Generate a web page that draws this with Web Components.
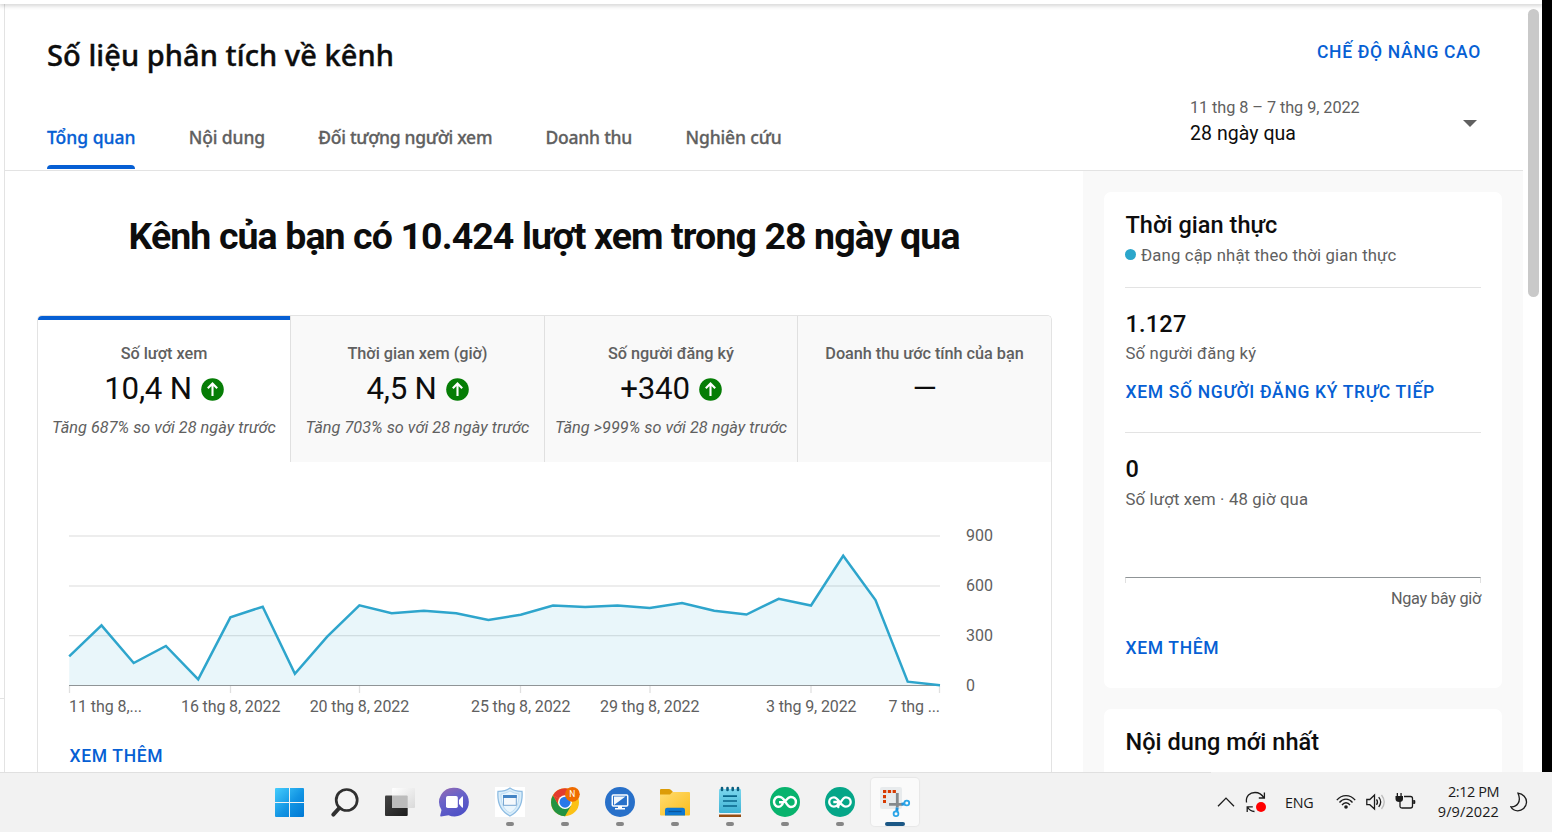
<!DOCTYPE html>
<html lang="vi">
<head>
<meta charset="utf-8">
<title>Số liệu phân tích về kênh</title>
<style>
  html, body { margin: 0; height: 100%; overflow: hidden; background: #fff; }
  body { font-family: Roboto, "Liberation Sans", sans-serif; color: #0d0d0d; }
</style>
</head>
<body>
<desktop-screen></desktop-screen>
<script>
const define = (name, html, setup) => {
  const tpl = document.createElement('template');
  tpl.innerHTML = '<style>*{box-sizing:border-box}</style>' + html;
  customElements.define(name, class extends HTMLElement {
    constructor() {
      super();
      this.attachShadow({ mode: 'open' }).append(tpl.content.cloneNode(true));
    }
    connectedCallback() { if (setup) setup(this, this.shadowRoot); }
  });
};

/* Upper-case text link */
define('action-link', `
<style>
  :host { display: block; font: 500 17.5px/24px Roboto, sans-serif; letter-spacing: .67px; color: #065fd4; white-space: nowrap; }
</style><slot></slot>`);

/* One navigation tab */
define('nav-tab', `
<style>
  :host { display: flex; flex-direction: column; justify-content: space-between; height: 49px; white-space: nowrap;
    font: 500 17.5px/35px "Noto Sans", "Open Sans", sans-serif; color: #606060; letter-spacing: var(--track, 0); -webkit-text-stroke: .3px; }
  :host([active]) { color: #065fd4; }
  i { display: block; height: 4px; border-radius: 4px 4px 0 0; }
  :host([active]) i { background: #065fd4; }
</style><span><slot></slot></span><i></i>`);

/* Date range picker */
define('date-range', `
<style>
  :host { display: flex; align-items: center; justify-content: space-between; }
  .r { font-size: 16.25px; line-height: 26px; color: #606060; letter-spacing: -.06px; }
  .n { font-size: 19.5px; line-height: 26px; color: #0d0d0d; letter-spacing: .05px; }
  svg { display: block; margin: 4px 4px 0 0; }
</style>
<div><div class="r"><slot name="range"></slot></div><div class="n"><slot></slot></div></div>
<svg width="14" height="7" viewBox="0 0 14 7"><path d="M0 0h14L7 7z" fill="#606060"/></svg>`);

define('page-header', `
<style>
  :host { display: flex; justify-content: space-between; height: 167px; padding: 0 42px 0 42px; border-bottom: 1px solid #e3e3e3; }
  .l { display: flex; flex-direction: column; justify-content: space-between; padding-top: 30px; }
  h1 { margin: 0; font: 500 29px/42px "Noto Sans", "Open Sans", sans-serif; letter-spacing: .07px; white-space: nowrap; -webkit-text-stroke: .4px; }
  nav { display: flex; margin-bottom: 1px; }
  nav-tab { margin-right: 53.3px; }
  .r { width: 291px; padding-top: 36px; }
  action-link { text-align: right; margin-bottom: 31px; }
</style>
<div class="l"><h1>Số liệu phân tích về kênh</h1>
<nav><nav-tab active style="--track:0px">Tổng quan</nav-tab><nav-tab style="--track:-.12px">Nội dung</nav-tab><nav-tab style="--track:-.29px">Đối tượng người xem</nav-tab><nav-tab style="--track:-.22px">Doanh thu</nav-tab><nav-tab style="--track:-.12px">Nghiên cứu</nav-tab></nav></div>
<div class="r"><action-link>CHẾ ĐỘ NÂNG CAO</action-link>
<date-range><span slot="range">11 thg 8 – 7 thg 9, 2022</span>28 ngày qua</date-range></div>`);

/* Metric tab above the chart */
define('metric-tab', `
<style>
  :host { display: flex; flex-direction: column; align-items: center; padding-top: 25px; height: 146px; background: #f9f9f9; border-right: 1px solid #e0e0e0; white-space: nowrap; }
  :host(:last-of-type) { border-right: 0; }
  :host([active]) { background: linear-gradient(#065fd4 4px, #fff 4px) padding-box; }
  .l { font: 500 16.25px/26px Roboto, sans-serif; color: #606060; letter-spacing: -.03px; }
  .v { display: flex; align-items: center; gap: 9px; font-size: 31.25px; line-height: 44px; color: #0d0d0d; font-weight: 400; letter-spacing: -.25px; }
  .s { font-size: 16.25px; font-style: italic; line-height: 26px; margin-top: 4px; color: #606060; letter-spacing: .03px; }
  svg { display: none; margin-top: 1px; }
  :host([up]) svg { display: block; }
</style>
<div class="l"><slot name="label"></slot></div>
<div class="v"><slot></slot><svg width="23" height="23" viewBox="0 0 23 23"><circle cx="11.5" cy="11.5" r="11.3" fill="#067d06"/><path d="M11.5 18V6M6.8 10.3l4.7-4.8 4.700 4.8" fill="none" stroke="#fff" stroke-width="2.1"/></svg></div>
<div class="s"><slot name="sub"></slot></div>`);

/* Area chart of daily views */
define('views-chart', `
<style>
  :host { display: block; }
  svg { display: block; }
  text { font: 400 16px Roboto, sans-serif; fill: #606060; }
</style>
<svg width="1013" height="258" viewBox="38 462 1013 258">
  <g stroke="#ededed" stroke-width="2"><path d="M69 536H940M69 586H940"/><path d="M69 635.7H940" stroke="#e4e4e4" stroke-width="1.3"/></g>
  <path class="area" fill="#2ba2cd" fill-opacity=".1"/>
  <path d="M69 685.5H940" stroke="#8f9496"/>
  <path d="M69.5 686v7M230.5 686v7M359.5 686v7M520.5 686v7M650 686v7M811 686v7M939.5 686v7" stroke="#e0e0e0" stroke-width="1.3"/>
  <path class="line" fill="none" stroke="#2ea5cc" stroke-width="2.5" stroke-linejoin="miter"/>
  <g class="y"></g><g class="x"></g>
</svg>`, (host, root) => {
  const ys = [656.3,625.4,663,646,679.3,617.3,606.7,673.7,636.7,605.3,613.3,610.7,613.3,620,614.7,605.5,607,605.5,608,603,610.7,614.5,598.8,605.5,555.7,600,681.7,685.3];
  const pts = ys.map((y, i) => (69.2 + i * 32.25).toFixed(1) + ' ' + y).join('L');
  root.querySelector('.line').setAttribute('d', 'M' + pts);
  root.querySelector('.area').setAttribute('d', 'M' + pts + 'V685.5H69.2Z');
  root.querySelector('.y').innerHTML = [[900,541],[600,591],[300,641],[0,691]]
    .map(([t, y]) => `<text x="966" y="${y}" textLength="${t ? 27 : 9}">${t}</text>`).join('');
  root.querySelector('.x').innerHTML = [[69,'11 thg 8,...',73],[181,'16 thg 8, 2022',99.5],[309.7,'20 thg 8, 2022',99.5],[471,'25 thg 8, 2022',99.5],[600,'29 thg 8, 2022',99.5],[766,'3 thg 9, 2022',90.5],[888.5,'7 thg ...',51.5]]
    .map(([x, t, w]) => `<text x="${x}" y="712" textLength="${w}">${t}</text>`).join('');
});

define('overview-panel', `
<style>
  :host { display: flex; flex-direction: column; flex: 0 0 1078px; }
  h2 { margin: 42px 0 0; text-align: center; font: 700 37.5px/46px Roboto, sans-serif; letter-spacing: -.9px; white-space: nowrap; }
  .card { flex: 1; margin: 56px 31px 0 32px; border: 1px solid #e3e3e3; border-bottom: 0; border-radius: 5px 5px 0 0; overflow: hidden; }
  .m { display: grid; grid-template-columns: 253px 254px 253px 253px; }
  action-link { margin: 24px 0 0 31.5px; }
</style>
<h2>Kênh của bạn có 10.424 lượt xem trong 28 ngày qua</h2>
<div class="card"><div class="m">
<metric-tab active up><span slot="label">Số lượt xem</span>10,4 N<span slot="sub">Tăng 687% so với 28 ngày trước</span></metric-tab>
<metric-tab up><span slot="label">Thời gian xem (giờ)</span>4,5 N<span slot="sub">Tăng 703% so với 28 ngày trước</span></metric-tab>
<metric-tab up><span slot="label">Số người đăng ký</span>+340<span slot="sub">Tăng &gt;999% so với 28 ngày trước</span></metric-tab>
<metric-tab><span slot="label">Doanh thu ước tính của bạn</span>—</metric-tab>
</div><views-chart></views-chart><action-link>XEM THÊM</action-link></div>`);

/* White card in the side column */
define('side-card', `
<style>
  :host { display: block; background: #fff; border-radius: 7px; padding: 17px 21px 0; white-space: nowrap; }
  .t { font: 500 23.5px/32px Roboto, sans-serif; color: #0d0d0d; padding-left: .5px; letter-spacing: .04px; }
</style><div class="t"><slot name="title"></slot></div><slot></slot>`);

define('realtime-body', `
<style>
  :host { display: block; font-size: 16.7px; line-height: 26px; color: #606060; letter-spacing: .15px; }
  .live { display: flex; align-items: center; gap: 5px; margin-top: 2px; }
  .live i { width: 11px; height: 11px; border-radius: 50%; background: #2ba6cb; margin-top: -3px; }
  hr { border: 0; height: 1px; background: #e3e3e3; margin: 0; }
  .n { font: 500 23.5px/32px Roboto, sans-serif; color: #0d0d0d; letter-spacing: .2px; padding-left: .5px; }
  .sub { padding-left: .5px; }
  .axis { height: 6px; border: 1px solid #e0e0e0; border-top-color: #8f9496; border-bottom: 0; margin-top: 64px; }
  .now { text-align: right; margin: 3px 0 24px; font-size: 16.25px; letter-spacing: -.25px; }
  action-link { padding-left: .5px; }
</style>
<div class="live"><i></i><span>Đang cập nhật theo thời gian thực</span></div>
<hr style="margin:18px 0 20px"><div class="n">1.127</div><div class="sub" style="margin-top:1px">Số người đăng ký</div>
<action-link style="margin-top:13px">XEM SỐ NGƯỜI ĐĂNG KÝ TRỰC TIẾP</action-link>
<hr style="margin:28px 0 20px"><div class="n">0</div><div class="sub" style="margin-top:2px">Số lượt xem · 48 giờ qua</div>
<div class="axis"></div><div class="now">Ngay bây giờ</div><action-link>XEM THÊM</action-link>`);

define('side-panel', `
<style>
  :host { display: flex; flex-direction: column; gap: 21px; flex: 0 0 440px; background: #f9f9f9; padding: 21px 21px 0; overflow: hidden; }
  side-card { flex: 0 0 496px; }
</style>
<side-card><span slot="title">Thời gian thực</span><realtime-body></realtime-body></side-card>
<side-card><span slot="title">Nội dung mới nhất</span></side-card>`);

/* Taskbar button: 48px square with a running indicator */
define('task-button', `
<style>
  :host { display: grid; width: 48px; height: 48px; border-radius: 4px; }
  :host([active]) { background: #fafafa; box-shadow: 0 0 1px 1px #e7e7e7; }
  ::slotted(svg) { grid-area: 1/1; display: block; }
  i { grid-area: 1/1; place-self: end center; width: 8px; height: 4px; border-radius: 2px; background: #868686; display: none; }
  :host([running]) i { display: block; }
  :host([active]) i { display: block; width: 20px; background: #1b5785; }
</style><slot></slot><i></i>`);

define('system-tray', `
<style>
  :host { display: flex; align-items: center; width: 342px; height: 60px; padding-left: 6px; color: #1a1a1a; font: 400 14.5px/20px "Open Sans", "Noto Sans", sans-serif; }
  svg { display: block; fill: none; stroke: #1c1c1c; stroke-width: 1.3; flex: none; }
  .lang { width: 29px; margin: 2px 22px 0 18px; font-size: 14.3px; letter-spacing: -.2px; }
  .clock { width: 66px; text-align: right; margin: 0 11px 0 16px; letter-spacing: -.45px; }
  .clock div + div { letter-spacing: .1px; }
</style>
<svg width="20" height="20" viewBox="0 0 20 20"><path d="M2 14.3l8-8.2 8 8.2"/></svg>
<svg width="22" height="24" viewBox="0 0 22 24" style="margin-left:9px"><path d="M1.5 12.5C.5 6 5 2.5 10 2.5c4 0 7 2 9 5.5M19.4 2.5V8h-5.6M2.2 22v-5.2h5.6M2.5 17c1.5 2.7 4 4.3 7 4.5"/><circle cx="16" cy="17" r="5" fill="#f00" stroke="none"/></svg>
<span class="lang">ENG</span>
<svg width="20" height="20" viewBox="0 0 20 20"><path d="M.8 8.2c5-6.2 13.4-6.2 18.4 0M3.5 10.5c3.6-4.6 9.4-4.6 13 0M6 13c2.2-3 5.800-3 8 0"/><circle cx="10" cy="15" r="1.8" fill="#1c1c1c" stroke="none"/></svg>
<svg width="20" height="20" viewBox="0 0 20 20" style="margin-left:10px"><path d="M.8 7.500h3L8.500 3v14L3.800 12.700h-3zM10.500 7.300q2 2.800 0 5.500M12.700 5.200q4 4.800 0 9.600"/><path d="M15.500 3q5.500 7 0 14" stroke="#bdbdbd"/></svg>
<svg width="22" height="20" viewBox="0 0 22 20" style="margin-left:9px"><path d="M9 4.500h6.500q2 0 2 2v7.500q0 2-2 2H7q-2 0-2-1.500V9"/><path d="M.5 4h7.500v3q0 3-3.700 3T.5 7zM1.700 1h1.300v3H1.700zM5.400 1h1.300v3H5.400zM18.200 8h1.300l.8.8v2.500l-.8.8h-1.300z" fill="#1c1c1c" stroke="none"/></svg>
<div class="clock"><div>2:12 PM</div><div>9/9/2022</div></div>
<svg width="18" height="20" viewBox="0 0 18 20"><path d="M8 1.200c5 .6 8.700 4.500 8.500 9.200-.3 5-4.500 8.400-8.700 8.400-3 0-5.500-1.300-7-4 6 .5 11-5 7.200-13.600z"/></svg>`);

define('task-bar', `
<style>
  :host { display: flex; justify-content: space-between; align-items: flex-start; flex: 0 0 60px; background: #f2f2f2; }
  .apps { display: flex; gap: 7px; padding: 6px 0 0 266px; }
</style>
<div class="apps">
<task-button><svg width="48" height="48"><defs><linearGradient id="w" x1="9" y1="10" x2="38" y2="39" gradientUnits="userSpaceOnUse"><stop stop-color="#45cdfd"/><stop offset=".55" stop-color="#1294e3"/><stop offset="1" stop-color="#0078d4"/></linearGradient></defs><path d="M10 10h13v14H9V11q0-1 1-1zM24 10h13q1 0 1 1v13H24zM9 25h14v14H10q-1 0-1-1zM24 25h14v13q0 1-1 1H24z" fill="url(#w)"/></svg></task-button>
<task-button><svg width="48" height="48" fill="none" stroke="#303030"><circle cx="25.700" cy="22" r="10.500" stroke-width="2.700" fill="#f4f4f4"/><path d="M18.300 30l-6 6.600" stroke-width="4" stroke-linecap="round"/></svg></task-button>
<task-button><svg width="48" height="48"><defs><linearGradient id="d" x2="1" y2="1"><stop stop-color="#444"/><stop offset="1" stop-color="#1d1d1d"/></linearGradient><linearGradient id="l" x2="1" y2="1"><stop stop-color="#fff"/><stop offset="1" stop-color="#d9d9d9"/></linearGradient></defs><rect x="9" y="17.500" width="22.700" height="20.500" rx="1" fill="url(#d)"/><rect x="16" y="10" width="23" height="20" rx="1" fill="url(#l)"/><path d="M16 17.500h14.700q1 0 1 1V30H17q-1 0-1-1z" fill="#bcbcbc"/></svg></task-button>
<task-button><svg width="48" height="48"><defs><linearGradient id="c" x2=".5" y2="1"><stop stop-color="#9a6bb0"/><stop offset=".45" stop-color="#6a63c8"/><stop offset="1" stop-color="#5052c6"/></linearGradient></defs><path d="M23.500 9.700a14.400 14.400 0 1 1-6 27.500l-7.500 1.300q-1 0-.8-1l1.300-5.500A14.400 14.400 0 0 1 23.500 9.700z" fill="url(#c)"/><rect x="15" y="18" width="11.800" height="12" rx="1.800" fill="#fff"/><path d="M28 22l3-3.500q1-.7 1 .7v9.600q0 1.400-1 .7L28 26z" fill="#fff"/></svg></task-button>
<task-button running><svg width="48" height="48"><path d="M9 9h30v30H9z" fill="#fff"/><path d="M24 10q5 3.500 12 3.300C37 25 34 33 24 38 14 33 11 25 12 13.300 19 13.500 24 10 24 10z" fill="#d9edfa" stroke="#8ebce2" stroke-width="1.300"/><path d="M24 13q4 2.500 9 3c0 9-2 15-9 19-7-4-9-10-9-19 5-.5 9-3 9-3z" fill="#eaf6fd" stroke="#b5d8f1" stroke-width=".8"/><rect x="17.500" y="17.500" width="12.800" height="9.800" fill="#f5f9fc" stroke="#78a7d2"/><path d="M17 17h13.800v3H17z" fill="#4485c5"/></svg></task-button>
<task-button running><svg width="48" height="48"><circle cx="24" cy="24.200" r="14" fill="#fbc116"/><path d="M24 24.200L11.900 17.200A14 14 0 0 1 36.100 17.200H24z" fill="#e33b2e"/><path d="M11.900 17.200A14 14 0 0 0 24 38.200L30 27.700 24 24.200l-6 3.500z" fill="#229342"/><path d="M24 24.200L36.100 17.200H24A7 7 0 0 0 17.900 27.700L11.900 17.200z" fill="#e33b2e"/><circle cx="24" cy="24.200" r="6.900" fill="#fff"/><circle cx="24" cy="24.200" r="5.500" fill="#2878e8"/><circle cx="31.400" cy="16.300" r="7.400" fill="#ef6c00"/><text x="31.400" y="19.200" text-anchor="middle" font-family="Roboto, sans-serif" font-size="8.500" fill="#fff">N</text></svg></task-button>
<task-button running><svg width="48" height="48"><circle cx="24" cy="24" r="15" fill="#2870c9"/><rect x="16.300" y="17" width="15.400" height="11" rx="1" fill="#2870c9" stroke="#fff" stroke-width="1.500"/><path d="M29.500 18.500L18 27v-8.500z" fill="#fff" opacity=".95"/><path d="M22 28h4v2h3v1.500H19V30h3z" fill="#fff"/></svg></task-button>
<task-button running><svg width="48" height="48"><defs><linearGradient id="f" x2="1" y2="1"><stop stop-color="#ffdc70"/><stop offset="1" stop-color="#fbbd1c"/></linearGradient></defs><path d="M9 18v-6q0-1 1-1h8q1 0 1.800.8L22 14v4z" fill="#dc9c07"/><path d="M9 16.500h10l2.500-2.500H38q1 0 1 1v21.500q0 1-1 1H10q-1 0-1-1z" fill="url(#f)"/><path d="M14 37.500V32q0-2.300 2.300-2.300h15.400Q34 29.700 34 32v5.500z" fill="#0e78d2"/><path d="M17.500 33.500h13" stroke="#08559c" stroke-width="1.300"/></svg></task-button>
<task-button running><svg width="48" height="48"><defs><linearGradient id="n" x2="0" y2="1"><stop stop-color="#7bd7ee"/><stop offset="1" stop-color="#3eb2d4"/></linearGradient></defs><path d="M13 35h22v4H13z" fill="#954c12"/><path d="M13 34h22v2.500H13z" fill="#f4f4f4"/><rect x="13" y="11" width="22" height="24" rx="1" fill="url(#n)"/><path d="M17 18.200h14M17 23h14M17 28h14" stroke="#09668a" stroke-width="1.700"/><path d="M16 10v2M21.500 10v2M26.700 10v2M32 10v2" stroke="#0b5f80" stroke-width="2.600" stroke-linecap="round"/></svg></task-button>
<task-button running><svg width="48" height="48"><circle cx="24" cy="24" r="15" fill="#08b36d"/><path d="M21.500 20.200c-2.300-2-5.500-1.900-7.300.2-1.900 2.300-1.500 5.900.8 7.500 3 2 6.700.2 7-3.700h-4M22.500 24.200c2-.2 3.500-4.900 7-5.200 3.300-.2 5.400 2.200 5.400 5 0 2.900-2.100 5-5 5-4.200 0-4.700-6-8.400-8.800" fill="none" stroke="#fff" stroke-width="2.400"/></svg></task-button>
<task-button running><svg width="48" height="48"><circle cx="24" cy="24" r="15" fill="#05a688"/><path d="M22.500 24h-5.200M22.500 24c-.3 3-2 4.600-4.600 4.600-2.600 0-4.700-2-4.700-4.600s2.100-4.700 4.700-4.700c4.900 0 6.400 9.300 12 9.300 2.700 0 4.800-2 4.800-4.600s-2.100-4.700-4.800-4.700c-4 0-4.800 6-7.600 8.300M20.500 27l2.500 2.800" fill="none" stroke="#fff" stroke-width="2.300"/></svg></task-button>
<task-button active><svg width="48" height="48" fill="none"><rect x="9" y="9" width="22" height="22" rx="2" fill="#e8ebed"/><path d="M12 13.500h13.500" stroke="#d83b01" stroke-width="3" stroke-dasharray="3.300 1.500"/><path d="M13.500 17v8" stroke="#d83b01" stroke-width="3" stroke-dasharray="3.200 1.800"/><path d="M26.300 15v14.500M18 26.300h13.500" stroke="#85898c" stroke-width="2.800"/><path d="M30.500 26.300l3.500-.5M26.200 29.500L25.700 34" stroke="#2193dc" stroke-width="2.900"/><circle cx="35.800" cy="25" r="2.400" stroke="#2ba5e8" stroke-width="1.800"/><circle cx="25" cy="35.700" r="2.400" stroke="#2ba5e8" stroke-width="1.800"/></svg></task-button>
</div>
<system-tray></system-tray>`);

define('desktop-screen', `
<style>
  :host { display: flex; flex-direction: column; width: 1552px; height: 832px; overflow: hidden; background: #fff; }
  .win { display: flex; flex: 0 0 772px; overflow: hidden; }
  .view { flex: 0 0 1542px; display: flex; flex-direction: column; }
  .edge { height: 4px; flex: none; box-shadow: 0 1px 4px 1px #0000002b; z-index: 1; }
  .cols { flex: 1; display: flex; min-height: 0; }
  .rail { flex: 0 0 5px; border-right: 1px solid #e3e3e3; padding-top: 694px; }
  .rail i { display: block; height: 1px; background: #e3e3e3; }
  main { flex: 0 0 1518px; display: flex; flex-direction: column; }
  .body { flex: 1; display: flex; min-height: 0; }
  .scroll { flex: 1; padding: 5px 0 0 5px; }
  .scroll i { display: block; width: 11px; height: 288px; border-radius: 6px; background: #c9c9c9; }
  .black { flex: 1; background: #000; }
  .rule { height: 1px; width: 1211px; background: #e0e0e0; margin-bottom: -1px; z-index: 1; flex: none; }
</style>
<div class="win"><div class="view"><div class="edge"></div><div class="cols">
<div class="rail"><i></i></div>
<main><page-header></page-header><div class="body"><overview-panel></overview-panel><side-panel></side-panel></div></main>
<div class="scroll"><i></i></div></div></div><div class="black"></div></div>
<div class="rule"></div><task-bar></task-bar>`);
</script>
</body>
</html>
